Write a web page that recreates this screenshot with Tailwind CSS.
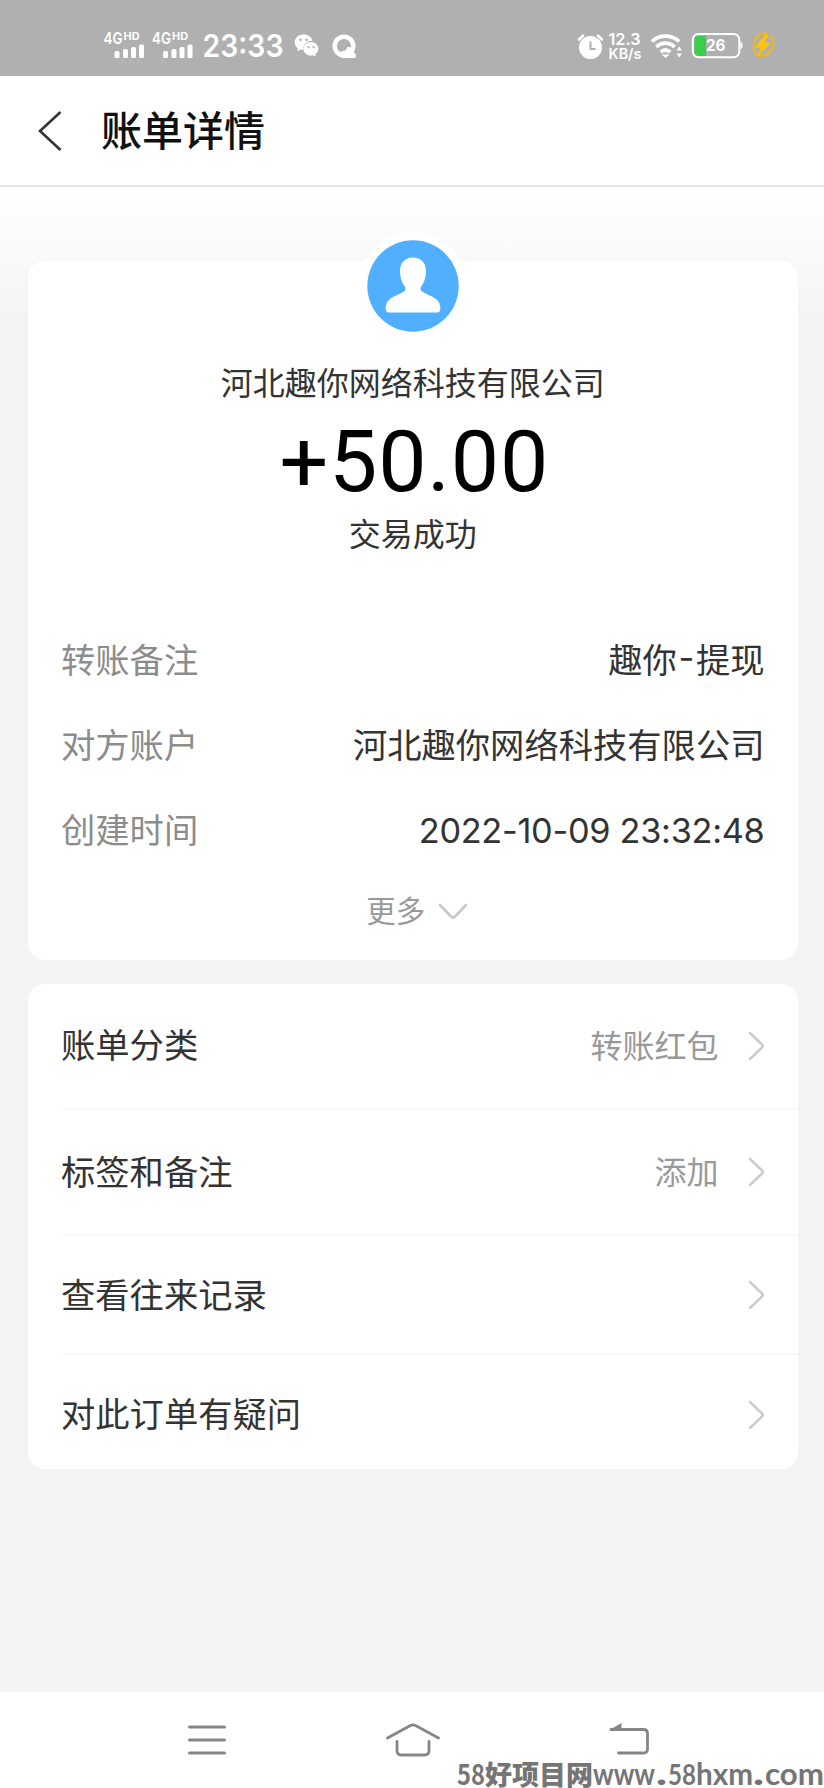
<!DOCTYPE html>
<html lang="zh-CN">
<head>
<meta charset="utf-8">
<title>账单详情</title>
<script src="https://cdn.jsdelivr.net/npm/@tailwindcss/browser@4"></script>
</head>
<body class="bg-[#f4f4f4] font-['Noto_Sans_CJK_SC',sans-serif] text-[#333]">
<div class="relative flex h-[1788px] w-[824px] flex-col overflow-hidden">
  <!-- Status bar -->
  <header class="h-[76px] shrink-0 bg-[#b0b0b0]">
    <svg class="block" width="824" height="76" viewBox="0 0 824 76" fill="#fff" font-family="Inter, sans-serif">
      <g id="signal">
        <text x="103.500" y="44" font-size="16" font-weight="600" textLength="19" lengthAdjust="spacingAndGlyphs">4G</text>
        <text x="123.500" y="40" font-size="10.500" font-weight="700" textLength="16" lengthAdjust="spacingAndGlyphs">HD</text>
        <rect x="114.500" y="51" width="5" height="7" rx="1.500"/>
        <rect x="123" y="49" width="5" height="9" rx="1.500"/>
        <rect x="131" y="47" width="5" height="11" rx="1.500"/>
        <rect x="139" y="44.500" width="5" height="13.500" rx="1.500"/>
      </g>
      <use href="#signal" x="48.500"/>
      <text x="202.500" y="56.800" font-size="31" font-weight="600" textLength="81" lengthAdjust="spacingAndGlyphs">23:33</text>
      <g>
        <path d="M303.500 34.500c-5 0-8.800 3.500-8.800 7.800 0 2.500 1.200 4.600 3.200 6l-.8 3 3.300-1.700 2.600.4c-.3-6 4.500-9.300 9.500-9.200-.8-3.800-4.500-6.300-9-6.300Z"/>
        <path d="M311 42c-4.500 0-7.700 3-7.700 6.700s3.400 6.800 7.700 6.800l2.300-.3 2.600 1.400-.6-2.500c2-1.300 3-3.200 3-5.400 0-3.700-3.100-6.700-7.300-6.700Z"/>
        <g fill="#b0b0b0"><circle cx="300.500" cy="39.800" r="1.300"/><circle cx="306.500" cy="39.800" r="1.300"/><circle cx="308.600" cy="47.200" r="1.100"/><circle cx="313.600" cy="47.200" r="1.100"/></g>
      </g>
      <circle cx="344" cy="46" r="9.300" fill="none" stroke="#fff" stroke-width="4.500"/>
      <path d="M338 54.500c2-3 5-4 7.500-4l2-3.500h2.500l2 4c3 1.500 4 3 4 5.200 0 1.300-1 1.800-2 1.800h-10c-3 0-5-1.200-6-3.500Z"/>
      <!-- Alarm -->
      <circle cx="590.500" cy="47.500" r="11.500"/>
      <path d="M579 39.500l4-3.800M602 39.500l-4-3.800" stroke="#fff" stroke-width="2.600" stroke-linecap="round"/>
      <path d="M590.500 41.500v7.500h5" fill="none" stroke="#b0b0b0" stroke-width="2"/>
      <text x="608.500" y="45" font-size="16" font-weight="600" textLength="32" lengthAdjust="spacingAndGlyphs">12.3</text>
      <text x="608.500" y="59" font-size="14.500" font-weight="600" textLength="33" lengthAdjust="spacingAndGlyphs">KB/s</text>
      <!-- Wi-Fi -->
      <g fill="none" stroke="#fff" stroke-width="3.700">
        <path d="M651.800 41.500c8-7.300 19.400-7.300 27.400 0"/>
        <path d="M656.300 46.800c5.600-5 12.800-5 18.400 0"/>
        <path d="M660.800 52c3-2.600 6.400-2.600 9.400 0"/>
      </g>
      <path d="M661.500 54.500h8l-4 3.600Z"/>
      <path d="M676.500 50.500l2.700-4 2.700 4ZM676.500 53.500l2.700 4 2.700-4Z"/>
      <!-- Battery -->
      <path d="M698 36h8v20h-8q-3.500-1-3.500-4.500V40q0-4 3.500-4Z" fill="#36d04b"/>
      <rect x="692.800" y="34" width="46.500" height="23.200" rx="5.500" fill="none" stroke="#fff" stroke-width="2"/>
      <path d="M740.500 42q2 0 2 2v3q0 2-2 2Z"/>
      <text x="706" y="51.300" font-size="15.500" font-weight="700" textLength="19.500" lengthAdjust="spacingAndGlyphs">26</text>
      <!-- Charging bolt -->
      <g fill="none" stroke="#e7b72c" stroke-width="2.500" stroke-linecap="round">
        <path d="M766 33.500c-7-.500-12 5-12 12 0 4 1 7 3.500 9"/>
        <path d="M771 36.500c3.500 5 2.500 11-1.500 15.500-3 3-7 4.500-10.500 4"/>
      </g>
      <path d="M766 34.500l-10.500 12.500 5.500 1-3 8 12-12.500-6-1 4-7Z" fill="#fcc40c" stroke="#fcc40c" stroke-width="1" stroke-linejoin="round"/>
    </svg>
  </header>

  <!-- Title bar -->
  <div class="flex h-[111px] shrink-0 items-center border-b-2 border-[#e6e6e6] bg-white pl-[37px]">
    <svg class="mr-[39px]" width="25" height="42" viewBox="0 0 25 42" fill="none" stroke="#333" stroke-width="2.600"><path d="M23.500 2 3 21l20.500 19"/></svg>
    <h1 class="pb-[5px] text-[41px] leading-[60px] font-medium text-[#111]">账单详情</h1>
  </div>

  <main class="flex grow flex-col bg-linear-to-b from-white from-0% to-[#f4f4f4] to-[130px] pt-[74px] pr-[26.5px] pl-[28px]">
    <!-- Transaction -->
    <section class="flex h-[699px] shrink-0 flex-col items-center rounded-[17px] bg-white">
      <div class="-mt-[29px] flex size-[108px] shrink-0 items-center justify-center rounded-full bg-white">
        <svg width="92" height="92" viewBox="0 0 92 92"><circle cx="46" cy="46" r="45.700" fill="#50b0ff"/><path d="M46 17.500c-8 0-13 5.500-13 13.500 0 5.500 1.300 11 4.500 15 1.500 2 1.500 4-.5 5.500-4.500 3-11 4.500-15 8.500-2.500 2.300-3.300 5-3.300 8.500 0 2.500 1 4 3 4h48.600c2 0 3-1.500 3-4 0-3.500-.8-6.200-3.300-8.500-4-4-10.500-5.500-15-8.500-2-1.500-2-3.500-.5-5.500 3.200-4 4.500-9.500 4.500-15 0-8-5-13.500-13-13.500Z" fill="#fff"/></svg>
      </div>
      <p class="mt-[17px] text-[32px] leading-[48px]">河北趣你网络科技有限公司</p>
      <p class="mt-[12px] pl-[3px] font-[Roboto] text-[86px] leading-[90px] tracking-[0.8px] text-black">+50.00</p>
      <p class="mt-px text-[32px] leading-[48px]">交易成功</p>
      <dl class="mt-[60px] flex w-full flex-col px-[33px] text-[34.3px] leading-[85px]">
        <div class="flex h-[85px] justify-between"><dt class="text-[#8c8c8c]">转账备注</dt><dd class="flex"><span>趣你</span><span class="-mt-px flex w-[19px] justify-center font-[Inter]">-</span><span>提现</span></dd></div>
        <div class="flex h-[85px] justify-between"><dt class="text-[#8c8c8c]">对方账户</dt><dd>河北趣你网络科技有限公司</dd></div>
        <div class="flex h-[85px] justify-between"><dt class="text-[#8c8c8c]">创建时间</dt><dd class="pt-[2px] font-[Inter] tracking-[-0.3px]">2022-10-09 23:32:48</dd></div>
      </dl>
      <div class="mt-[16px] flex items-center gap-[13px] pl-[9px] text-[29.5px] leading-[44px] text-[#999]">
        <span>更多</span>
        <svg class="mt-[6px]" width="30" height="18" viewBox="0 0 30 18" fill="none" stroke="#c8c8c8" stroke-width="2.600" stroke-linecap="round"><path d="M2 2l11 11.500q2 2 4 0L28 2"/></svg>
      </div>
    </section>

    <!-- Options -->
    <section class="mt-[24px] flex shrink-0 flex-col rounded-[17px] bg-white pl-[33px] text-[34.3px]">
      <div class="flex h-[126px] items-center border-b-2 border-[#f9f9f9] pr-[33px]">
        <span class="grow pb-[4px]">账单分类</span><span class="pb-[4px] text-[32px] text-[#999]">转账红包</span>
        <svg class="ml-[28px]" width="18" height="30" viewBox="0 0 18 30" fill="none" stroke="#ccc" stroke-width="2.500" stroke-linecap="round"><path d="M3 2l12 11.500q1.500 1.500 0 3L3 28"/></svg>
      </div>
      <div class="flex h-[126px] items-center border-b-2 border-[#f9f9f9] pr-[33px]">
        <span class="grow pb-[3px]">标签和备注</span><span class="pb-[4px] text-[32px] text-[#999]">添加</span>
        <svg class="ml-[28px]" width="18" height="30" viewBox="0 0 18 30" fill="none" stroke="#ccc" stroke-width="2.500" stroke-linecap="round"><path d="M3 2l12 11.500q1.500 1.500 0 3L3 28"/></svg>
      </div>
      <div class="flex h-[119px] items-center border-b-2 border-[#f9f9f9] pt-px pr-[33px]">
        <span class="grow pb-[3px]">查看往来记录</span>
        <svg width="18" height="30" viewBox="0 0 18 30" fill="none" stroke="#ccc" stroke-width="2.500" stroke-linecap="round"><path d="M3 2l12 11.500q1.500 1.500 0 3L3 28"/></svg>
      </div>
      <div class="flex h-[114px] items-center pt-[5px] pr-[33px]">
        <span class="grow pb-[4px]">对此订单有疑问</span>
        <svg width="18" height="30" viewBox="0 0 18 30" fill="none" stroke="#ccc" stroke-width="2.500" stroke-linecap="round"><path d="M3 2l12 11.500q1.500 1.500 0 3L3 28"/></svg>
      </div>
    </section>
  </main>

  <!-- System navigation -->
  <nav class="flex h-[96px] shrink-0 items-center bg-white pl-[187px]">
    <svg width="40" height="40" viewBox="0 0 40 40" fill="none" stroke="#868686" stroke-width="3" stroke-linecap="round"><path d="M2.500 7h35M2.500 20h35M2.500 33h35"/></svg>
    <svg class="ml-[158px]" width="56" height="40" viewBox="0 0 56 40" fill="none" stroke="#868686" stroke-width="2.800" stroke-linecap="round"><path d="M2.500 18 25.500 5.500q2.500-1.300 5 0L53.500 18M12 21.500v9q0 4.500 4.500 4.500h23q4.500 0 4.500-4.500v-9"/></svg>
    <svg class="ml-[167px]" width="42" height="40" viewBox="0 0 42 40"><path d="M3 9.500h32.500q4 0 4 4v15.500q0 4-4 4H10.500" fill="none" stroke="#868686" stroke-width="2.800" stroke-linecap="round"/><path d="M1.500 10 13.500 3v7.500H2Z" fill="#868686"/></svg>
  </nav>

  <!-- Watermark -->
  <svg class="absolute bottom-0 left-[456px] overflow-visible" width="368" height="30" viewBox="456 1758 368 30" fill="#757575" font-weight="700" font-family="'Noto Sans CJK SC', sans-serif">
    <text x="457" y="1785" font-size="28" textLength="28" lengthAdjust="spacingAndGlyphs">58</text>
    <text x="485" y="1784.500" font-size="27" font-weight="900" textLength="108" lengthAdjust="spacingAndGlyphs">好项目网</text>
    <g font-family="Lato, sans-serif">
      <text x="593" y="1785" font-size="31" textLength="62" lengthAdjust="spacingAndGlyphs">www</text>
      <text x="656" y="1785" font-size="34" font-weight="900" textLength="11" lengthAdjust="spacingAndGlyphs">.</text>
      <text x="668" y="1785" font-size="29" textLength="28" lengthAdjust="spacingAndGlyphs">58</text>
      <text x="696" y="1785" font-size="30" textLength="57" lengthAdjust="spacingAndGlyphs">hxm</text>
      <text x="753" y="1785" font-size="34" font-weight="900" textLength="11" lengthAdjust="spacingAndGlyphs">.</text>
      <text x="765" y="1785" font-size="31" textLength="59" lengthAdjust="spacingAndGlyphs">com</text>
    </g>
  </svg>
</div>
</body>
</html>
